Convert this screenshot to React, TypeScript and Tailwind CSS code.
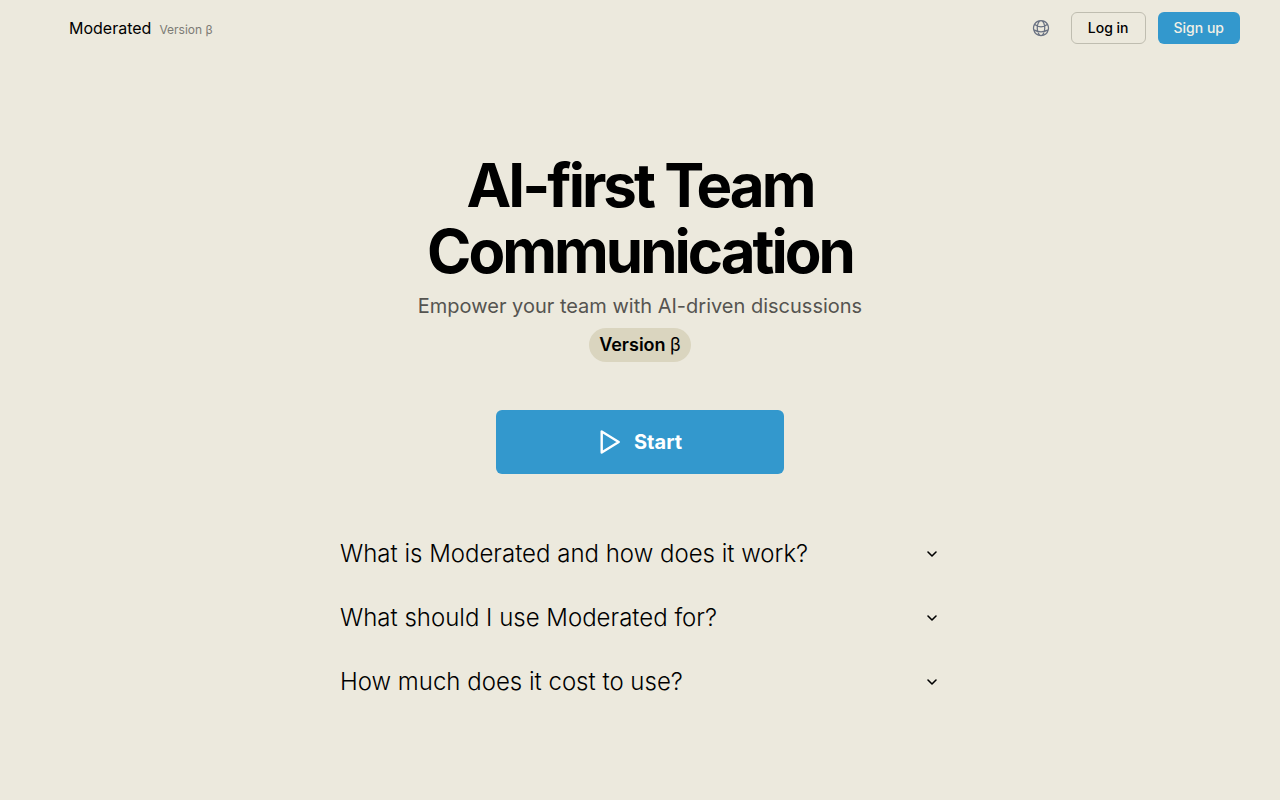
import { useState } from 'react';
import { HiOutlineGlobeAlt } from 'react-icons/hi2';

const FAQ = [
  {
    question: 'What is Moderated and how does it work?',
    answer: 'Moderated is a space for team discussions that are guided by AI.',
  },
  {
    question: 'What should I use Moderated for?',
    answer: 'Use it for any discussion where your whole team should be heard.',
  },
  {
    question: 'How much does it cost to use?',
    answer: 'Moderated is free to use during the beta.',
  },
];

function PlayIcon() {
  return (
    <svg width="24" height="24" viewBox="0 0 24 24" fill="none" stroke="currentColor" strokeWidth="2.4" strokeLinejoin="round">
      <path d="M3.700 1.500v21L20.700 12z" />
    </svg>
  );
}

function ChevronIcon({ open }: { open: boolean }) {
  return (
    <svg
      width="16"
      height="16"
      viewBox="0 0 16 16"
      fill="none"
      stroke="currentColor"
      strokeWidth="1.6"
      strokeLinecap="round"
      strokeLinejoin="round"
      className={open ? 'rotate-180' : ''}
    >
      <path d="M4 6l4 4 4-4" />
    </svg>
  );
}

function Header() {
  return (
    <header className="flex h-14 items-center justify-between pl-[69px] pr-10">
      <a href="#" className="flex items-baseline gap-2">
        <span className="text-base">Moderated</span>
        <span className="text-xs text-[#7c7b75]">Version β</span>
      </a>

      <div className="flex items-center gap-3">
        <button
          type="button"
          aria-label="Change language"
          className="mr-0.5 flex size-8 items-center justify-center text-gray-500"
        >
          <HiOutlineGlobeAlt size={20} />
        </button>
        <button
          type="button"
          className="h-8 rounded-md border border-[#bfbdb0] px-4 text-sm font-medium"
        >
          Log in
        </button>
        <button
          type="button"
          className="h-8 rounded-md bg-[#3398cd] px-4 text-sm font-medium text-[#f2f0e6]"
        >
          Sign up
        </button>
      </div>
    </header>
  );
}

function Hero() {
  return (
    <section className="flex flex-col items-center pt-24 text-center">
      <h1 className="max-w-[480px] text-6xl leading-[66px] font-bold tracking-tighter">
        AI-first Team Communication
      </h1>
      <p className="mt-2 text-xl text-[#555450]">Empower your team with AI-driven discussions</p>
      <span className="mt-2 rounded-full bg-[#dad5bf] px-2.5 py-1 text-lg leading-[26px] font-semibold">
        Version <span className="font-normal">β</span>
      </span>
      <button
        type="button"
        className="mt-12 flex h-16 w-72 items-center justify-center gap-3 rounded-md bg-[#3398cd] text-xl font-bold text-white"
      >
        <PlayIcon />
        Start
      </button>
    </section>
  );
}

function Faq() {
  const [open, setOpen] = useState<number | null>(null);

  return (
    <section className="mx-auto mt-12 w-full max-w-[600px]">
      {FAQ.map((item, i) => (
        <div key={item.question}>
          <button
            type="button"
            aria-expanded={open === i}
            onClick={() => setOpen(open === i ? null : i)}
            className="flex w-full items-center justify-between py-4 text-left text-2xl font-light"
          >
            {item.question}
            <ChevronIcon open={open === i} />
          </button>
          {open === i && <p className="pb-4 text-base">{item.answer}</p>}
        </div>
      ))}
    </section>
  );
}

export default function App() {
  return (
    <div className="min-h-screen bg-[#ece9dd] font-['Inter',sans-serif] text-black">
      <Header />
      <main className="px-6 pb-16">
        <Hero />
        <Faq />
      </main>
    </div>
  );
}
